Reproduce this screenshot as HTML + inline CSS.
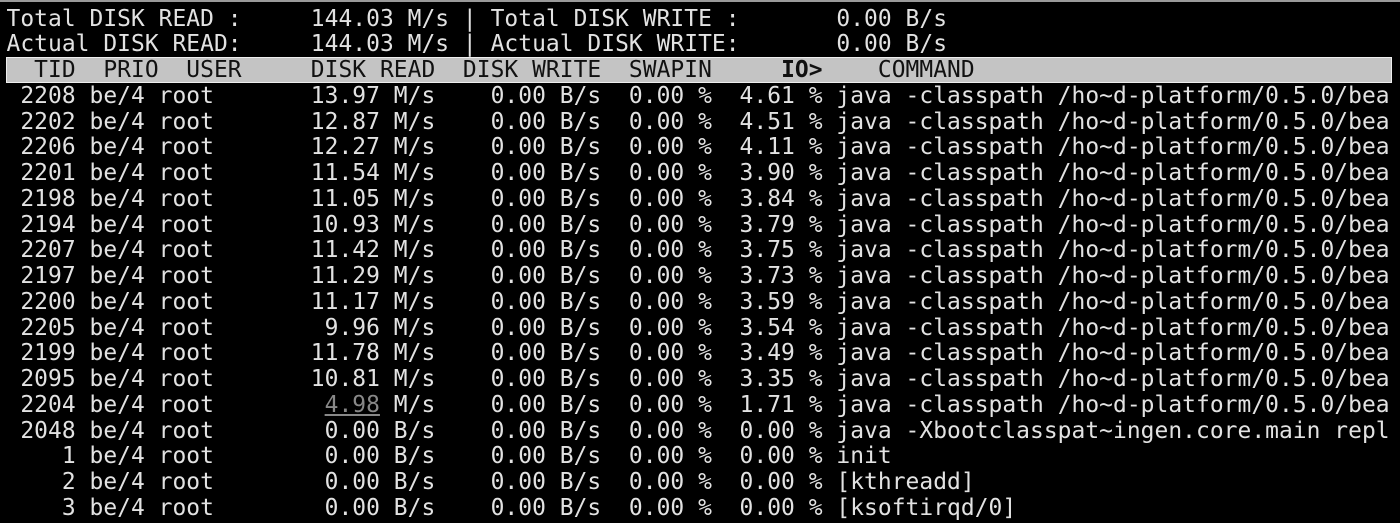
<!DOCTYPE html>
<html><head><meta charset="utf-8"><style>
html,body{margin:0;padding:0;background:#000;width:1400px;height:523px;overflow:hidden}
.top{position:absolute;left:0;top:0;width:1400px;height:2px;background:#999}
.bar{position:absolute;left:6px;top:57px;width:1386px;height:26px;background:#c4c4c4;border:1px solid #eee;box-sizing:border-box}
pre{position:absolute;left:6.5px;top:6.5px;margin:0;font-family:"DejaVu Sans Mono","Liberation Mono",monospace;font-size:22.9px;line-height:25.75px;color:#e2e2e2;letter-spacing:0.05px}
.h{color:#111}
.u{color:#888;text-decoration:underline}
</style></head><body>
<div class="top"></div>
<div class="bar"></div>
<pre>Total DISK READ :     144.03 M/s | Total DISK WRITE :       0.00 B/s
Actual DISK READ:     144.03 M/s | Actual DISK WRITE:       0.00 B/s
<span class="h">  TID  PRIO  USER     DISK READ  DISK WRITE  SWAPIN     <b>IO&gt;</b>    COMMAND</span>
 2208 be/4 root       13.97 M/s    0.00 B/s  0.00 %  4.61 % java -classpath /ho~d-platform/0.5.0/bea
 2202 be/4 root       12.87 M/s    0.00 B/s  0.00 %  4.51 % java -classpath /ho~d-platform/0.5.0/bea
 2206 be/4 root       12.27 M/s    0.00 B/s  0.00 %  4.11 % java -classpath /ho~d-platform/0.5.0/bea
 2201 be/4 root       11.54 M/s    0.00 B/s  0.00 %  3.90 % java -classpath /ho~d-platform/0.5.0/bea
 2198 be/4 root       11.05 M/s    0.00 B/s  0.00 %  3.84 % java -classpath /ho~d-platform/0.5.0/bea
 2194 be/4 root       10.93 M/s    0.00 B/s  0.00 %  3.79 % java -classpath /ho~d-platform/0.5.0/bea
 2207 be/4 root       11.42 M/s    0.00 B/s  0.00 %  3.75 % java -classpath /ho~d-platform/0.5.0/bea
 2197 be/4 root       11.29 M/s    0.00 B/s  0.00 %  3.73 % java -classpath /ho~d-platform/0.5.0/bea
 2200 be/4 root       11.17 M/s    0.00 B/s  0.00 %  3.59 % java -classpath /ho~d-platform/0.5.0/bea
 2205 be/4 root        9.96 M/s    0.00 B/s  0.00 %  3.54 % java -classpath /ho~d-platform/0.5.0/bea
 2199 be/4 root       11.78 M/s    0.00 B/s  0.00 %  3.49 % java -classpath /ho~d-platform/0.5.0/bea
 2095 be/4 root       10.81 M/s    0.00 B/s  0.00 %  3.35 % java -classpath /ho~d-platform/0.5.0/bea
 2204 be/4 root        <span class="u">4.98</span> M/s    0.00 B/s  0.00 %  1.71 % java -classpath /ho~d-platform/0.5.0/bea
 2048 be/4 root        0.00 B/s    0.00 B/s  0.00 %  0.00 % java -Xbootclasspat~ingen.core.main repl
    1 be/4 root        0.00 B/s    0.00 B/s  0.00 %  0.00 % init
    2 be/4 root        0.00 B/s    0.00 B/s  0.00 %  0.00 % [kthreadd]
    3 be/4 root        0.00 B/s    0.00 B/s  0.00 %  0.00 % [ksoftirqd/0]</pre>
</body></html>
